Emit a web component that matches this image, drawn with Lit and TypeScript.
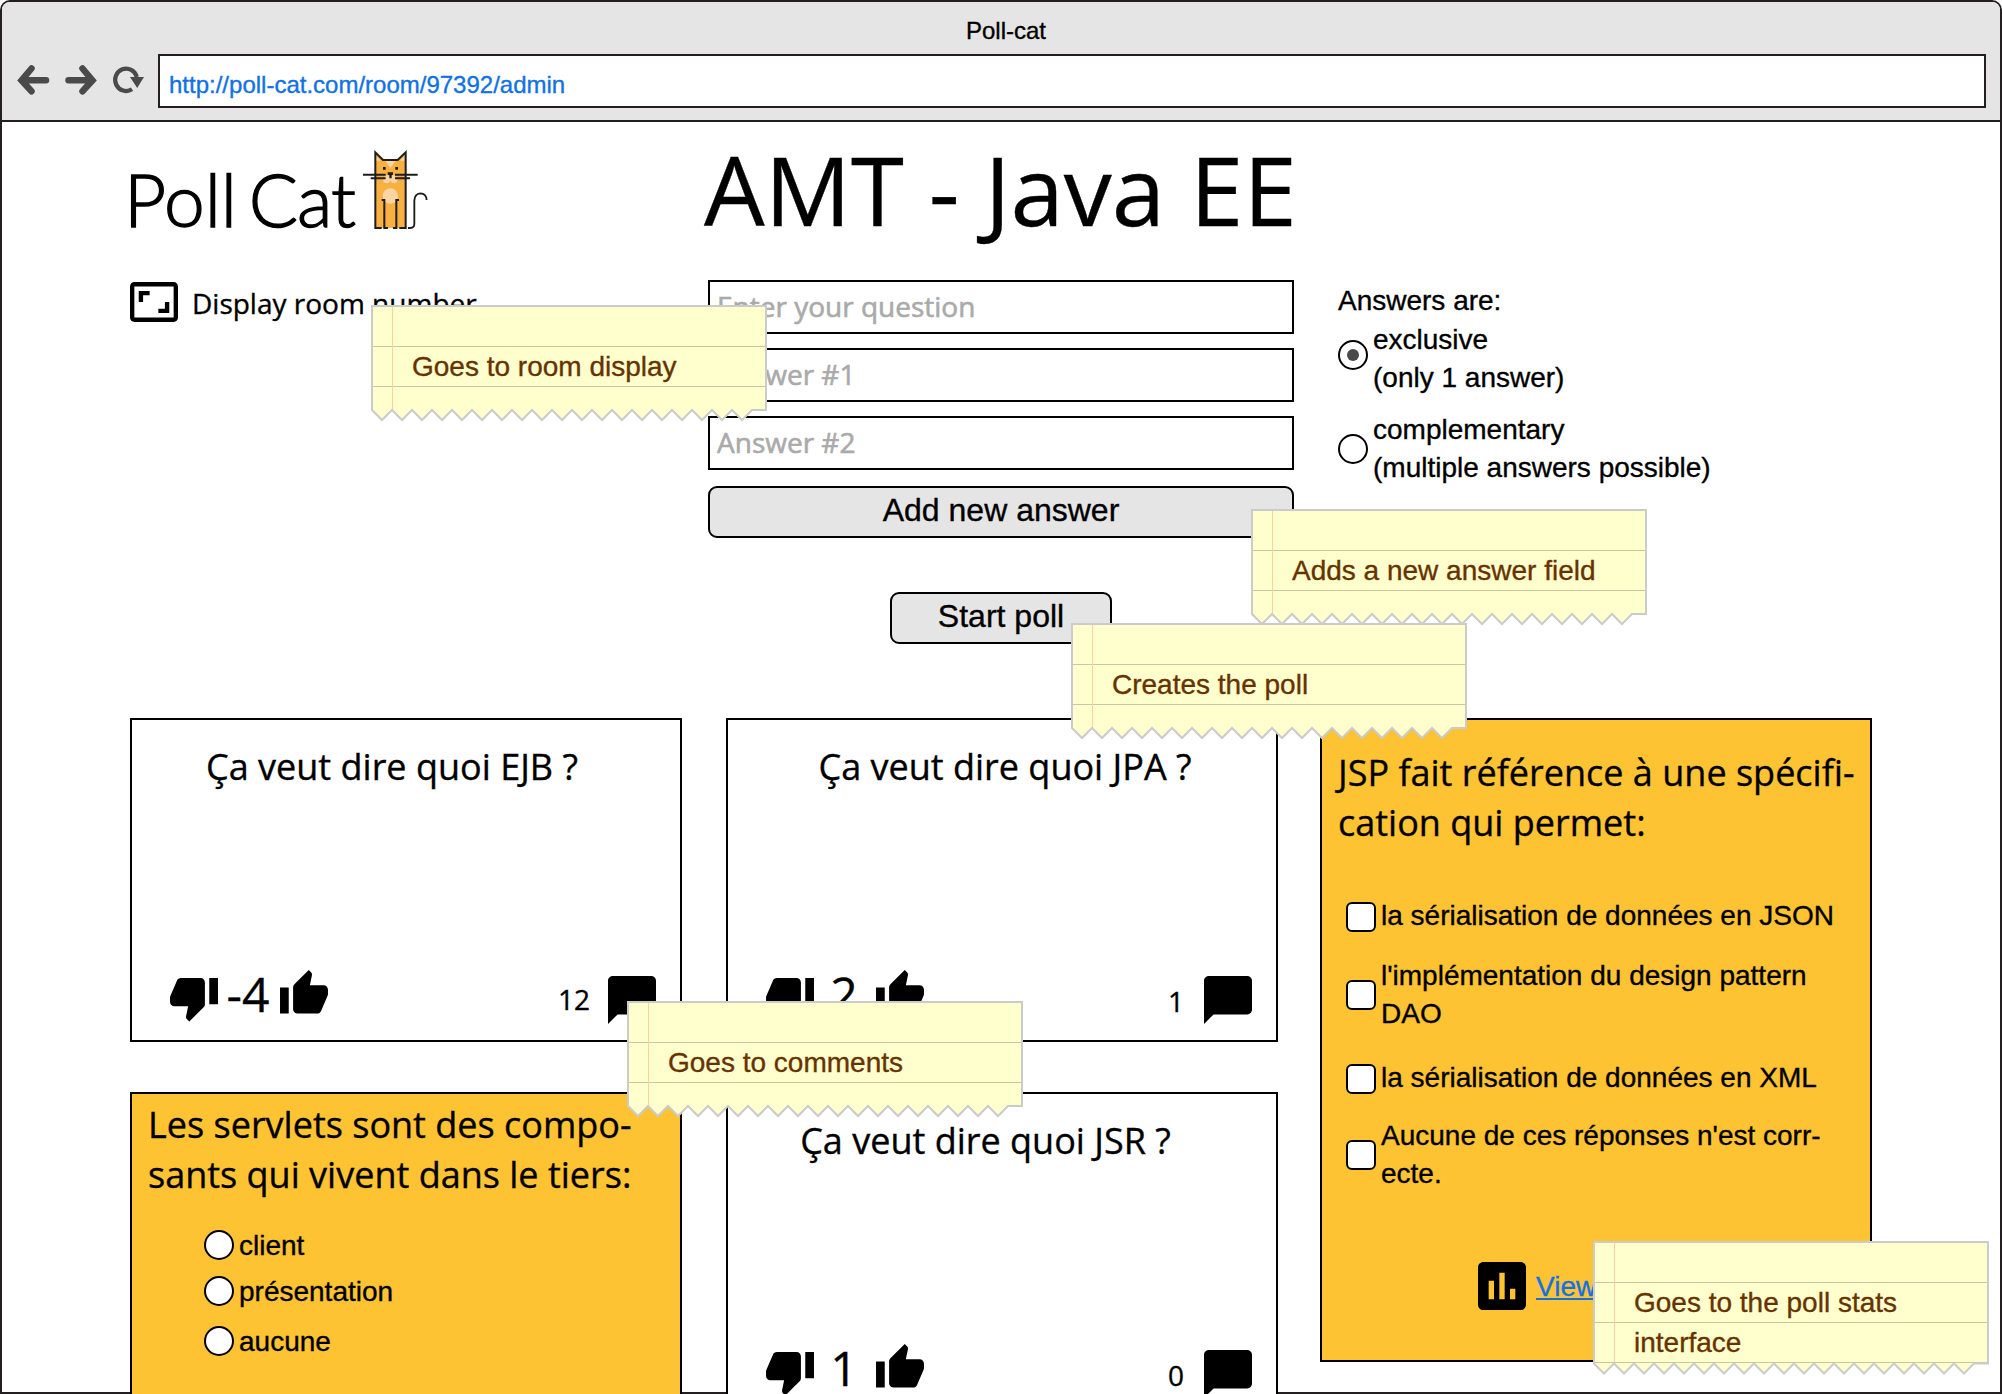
import { LitElement, html, css, svg } from "lit";
import { customElement, property } from "lit/decorators.js";

const THUMB_UP = "M1 21h4V9H1v12zm22-11c0-1.1-.9-2-2-2h-6.31l.95-4.57.03-.32c0-.41-.17-.79-.44-1.06L14.17 1 7.59 7.59C7.22 7.95 7 8.45 7 9v10c0 1.1.9 2 2 2h9c.83 0 1.54-.5 1.84-1.22l3.02-7.05c.09-.23.14-.47.14-.73v-1.91l-.01-.01L23 10z";
const THUMB_DOWN = "M15 3H6c-.83 0-1.54.5-1.84 1.22l-3.02 7.05c-.09.23-.14.47-.14.73v1.91l.01.01L1 14c0 1.1.9 2 2 2h6.31l-.95 4.57-.03.32c0 .41.17.79.44 1.06L9.83 23l6.59-6.59c.36-.36.58-.86.58-1.41V5c0-1.1-.9-2-2-2zm4 0v12h4V3h-4z";
const BUBBLE = "M20 2H4c-1.1 0-2 .9-2 2v18l4-4h14c1.1 0 2-.9 2-2V4c0-1.1-.9-2-2-2z";
const ASSESSMENT = "M19 3H5c-1.1 0-2 .9-2 2v14c0 1.1.9 2 2 2h14c1.1 0 2-.9 2-2V5c0-1.1-.9-2-2-2zM9 17H7v-7h2v7zm4 0h-2V7h2v10zm4 0h-2v-4h2v4z";
const ASPECT = "M19 12h-2v3h-3v2h5v-5zM7 9h3V7H5v5h2V9zm14-6H3c-1.1 0-2 .9-2 2v14c0 1.1.9 2 2 2h18c1.1 0 2-.9 2-2V5c0-1.1-.9-2-2-2zm0 16.01H3V4.99h18v14.02z";

/* Torn yellow paper annotation. */
@customElement("paper-note")
export class PaperNote extends LitElement {
  @property({ type: Array }) lines: string[] = [];

  static styles = css`
    :host { display: block; width: 396px; }
    .paper { display: block; overflow: visible; }
    .text {
      position: absolute; left: 41px; top: 42px;
      font: 28px/40px "Liberation Sans", Arial, sans-serif;
      color: #663300; white-space: nowrap;
    }
  `;

  render() {
    const bottom = this.lines.length > 1 ? 122.5 : 105;
    const rules = this.lines.length > 1 ? [41.5, 81.5, 121.5] : [41.5, 81.5];
    let d = `M1 1H395V${bottom}H381`;
    for (let x = 371; x > 0; x -= 20) d += `L${x} ${bottom + 10}L${x - 10} ${bottom}`;
    d += "Z";
    return html`
      <svg class="paper" width="396" height=${bottom + 12}>
        <path d=${d} fill="#ffffce"></path>
        ${rules.map((y) => svg`<path d="M2 ${y}H394" stroke="#c9c8a4" stroke-width="1" shape-rendering="crispEdges"></path>`)}
        <path d="M21.5 2V${bottom}" stroke="#ffcf9f" stroke-width="1"></path>
        <path d=${d} fill="none" stroke="#cbcbcb" stroke-width="2"></path>
      </svg>
      <div class="text">${this.lines.map((l) => html`<div>${l}</div>`)}</div>
    `;
  }
}

/* Card holding an open question with its votes and comments. */
@customElement("question-card")
export class QuestionCard extends LitElement {
  @property() question = "";
  @property() score = "";
  @property() comments = "";

  static styles = css`
    :host {
      display: flex; flex-direction: column; justify-content: space-between;
      box-sizing: border-box; width: 552px; height: 324px;
      border: 2px solid #000; background: #fff;
      font-family: "Open Sans", "Noto Sans", sans-serif;
    }
    .question {
      padding: 22px var(--inset-right, 0) 0 var(--inset-left, 0); text-align: center;
      font-size: 36px; line-height: 50px; white-space: nowrap;
    }
    .footer { display: flex; align-items: flex-start; height: 66px; padding: 0 24px 0 38px; }
    svg { display: block; flex: none; }
    .down { margin-top: 4px; }
    .up { margin-top: -4px; }
    .score {
      box-sizing: border-box; width: 62px; padding-right: 2px;
      display: flex; justify-content: center; font-size: 48px; line-height: 40px;
    }
    .count {
      margin-left: auto; padding-right: var(--count-gap, 20px);
      font-size: 28px; line-height: var(--count-line, 54px);
    }
    .bubble { margin-top: 2px; }
  `;

  render() {
    return html`
      <div class="question">${this.question}</div>
      <div class="footer">
        <svg class="down" width="48" height="43.6" viewBox="1 3 22 20"><path d=${THUMB_DOWN}></path></svg>
        <div class="score">${this.score}</div>
        <svg class="up" width="48" height="43.6" viewBox="1 1 22 20"><path d=${THUMB_UP}></path></svg>
        <div class="count">${this.comments}</div>
        <svg class="bubble" width="48" height="48" viewBox="2 2 20 20"><path d=${BUBBLE}></path></svg>
      </div>
    `;
  }
}

@customElement("app-root")
export class AppRoot extends LitElement {
  static styles = css`
    :host {
      display: block; position: relative; width: 2002px; height: 1394px; overflow: hidden;
      background: #fff; color: #000;
      font-family: "Liberation Sans", Arial, sans-serif; font-size: 28px; line-height: 38px;
      -webkit-text-stroke-width: 0.35px;
      --open: "Open Sans", "Noto Sans", sans-serif;
    }
    svg { display: block; flex: none; overflow: visible; }
    .window {
      box-sizing: border-box; width: 2002px; height: 1394px;
      border: 2px solid #231f20; border-radius: 10px 10px 0 0;
    }
    .chrome {
      height: 118px; background: #e5e5e5; border-bottom: 2px solid #231f20;
      border-radius: 8px 8px 0 0; font-size: 24px;
    }
    .caption { height: 52px; line-height: 58px; padding-left: 10px; text-align: center; }
    .bar { display: flex; align-items: flex-start; height: 54px; padding: 0 14px 0 14px; }
    .nav { margin: 10px 14px 0 0; }
    .address {
      box-sizing: border-box; flex: 1; height: 54px; border: 2px solid #231f20;
      background: #fff; color: #1071e5; padding-left: 9px; line-height: 58px;
    }
    .main { padding-left: 128px; }
    .head { display: flex; height: 158px; }
    .brand { width: 574px; padding-top: 18px; }
    .wordmark { font-family: Lato, sans-serif; font-weight: 300; font-size: 219px; }
    .title { font: 96px/130px var(--open); padding-top: 2px; margin: 0; white-space: nowrap; }
    .form { display: flex; height: 438px; }
    .room { display: flex; align-items: flex-start; width: 578px; padding-top: 2px; gap: 14px; }
    .room-label { font: 28px/42px var(--open); }
    .fields { display: flex; flex-direction: column; width: 586px; gap: 14px; }
    .field {
      box-sizing: border-box; height: 54px; border: 2px solid #000; background: #fff;
      padding-left: 7px; font: 28px/48px var(--open); color: #aaa;
      -webkit-text-stroke-width: 0.6px;
    }
    .button {
      box-sizing: border-box; height: 52px; border: 2px solid #000; border-radius: 9px;
      background: #e5e5e5; text-align: center; font-size: 32px; line-height: 44px; margin-top: 2px;
    }
    .start { width: 222px; align-self: center; margin-top: 40px; }
    .kind { padding: 2px 0 0 44px; }
    .choice { display: flex; gap: 5px; padding-top: 1px; }
    .choice + .choice { margin-top: 13px; }
    .radio {
      box-sizing: border-box; flex: none; width: 30px; height: 30px; border: 2px solid #000;
      border-radius: 50%; background: #fff; display: flex; align-items: center; justify-content: center;
    }
    .choice .radio { margin-top: 19px; }
    .choice + .choice .radio { margin-top: 23px; }
    .radio.on::after { content: ""; width: 12px; height: 12px; border-radius: 50%; background: #4a4a4a; }
    .cards { display: grid; grid-template-columns: 596px 594px 552px; align-items: start; }
    .column { display: flex; flex-direction: column; gap: 50px; }
    .ejb { --inset-right: 28px; --count-gap: 18px; --count-line: 50px; }
    .jpa { --inset-left: 6px; }
    .jsr { --inset-right: 33px; }
    .poll {
      box-sizing: border-box; width: 552px; height: 324px; border: 2px solid #000;
      background: #fdc332; padding: 6px 0 0 16px;
    }
    .poll.tall { height: 644px; padding-top: 28px; }
    .poll-title { font: 36px/50px var(--open); white-space: nowrap; }
    .option { display: flex; align-items: center; gap: 5px; white-space: nowrap; }
    .single { padding-left: 56px; margin-top: 26px; }
    .single .option { height: 38px; }
    .single .label { padding-top: 2px; }
    .single .option + .option { margin-top: 8px; }
    .single .option + .option + .option { margin-top: 12px; }
    .multi { padding-left: 8px; padding-top: 50px; display: flex; flex-direction: column; }
    .multi .option { height: 38px; }
    .multi .label { padding-bottom: 3px; }
    .multi .label.double { padding-bottom: 1px; }
    .multi .option:nth-child(2) { margin-top: 40px; }
    .multi .option:nth-child(3) { margin-top: 46px; }
    .multi .option:nth-child(4) { margin-top: 38px; }
    .box {
      box-sizing: border-box; flex: none; width: 30px; height: 30px; border: 2px solid #000;
      border-radius: 6px; background: #fff;
    }
    .stats { display: flex; align-items: center; gap: 10px; padding-left: 140px; margin-top: 88px; }
    .link {
      color: #1071e5; text-decoration: underline; text-decoration-thickness: 2px;
      text-underline-offset: 2px; padding-top: 2px;
    }
    .note { position: absolute; }
    .n1 { left: 371px; top: 305px; }
    .n2 { left: 1251px; top: 509px; }
    .n3 { left: 1071px; top: 623px; }
    .n4 { left: 627px; top: 1001px; }
    .n5 { left: 1593px; top: 1241px; }
  `;

  private choice(a: string, b: string, on = false) {
    return html`<div class="choice"><span class="radio ${on ? "on" : ""}"></span><div><div>${a}</div><div>${b}</div></div></div>`;
  }

  private nav() {
    return html`
      <svg class="nav" width="128" height="32" viewBox="16 64 128 32" fill="none" stroke="#4a4a4a" stroke-linecap="round">
        <path d="M46 80.3H24M31.500 68.500L21.500 80.300L31.500 91.300" stroke-width="6.500"></path>
        <path d="M68.500 80.300H90M82.500 68.500L92.500 80.300L82.500 91.300" stroke-width="6.500"></path>
        <path d="M132 89.300A11 11.200 0 1 1 136.800 77" stroke-width="4.200" stroke-linecap="butt"></path>
        <path d="M130 77H144L137.200 88Z" fill="#4a4a4a" stroke="none"></path>
      </svg>`;
  }

  private logo() {
    return html`
      <svg width="310" height="100" viewBox="30 0 930 300" fill="none" stroke="#1d1d1b" stroke-width="6">
        <g class="wordmark" fill="#000" stroke="#000" style="-webkit-text-stroke-width: 0" stroke-width="4">
          <text x="12" y="261">Poll</text>
          <text x="386" y="261" letter-spacing="-3">Cat</text>
        </g>
        <path d="M765 36L789 60H833L857 36V264H765Z" fill="#f8b041" stroke="none"></path>
        <path d="M796 62H827L811 85ZM768 48V62H782ZM854 48V62H840Z" fill="#fbd4a3" stroke="none"></path>
        <circle cx="811" cy="168" r="23" fill="#fbd4a3" stroke="none"></circle>
        <path d="M799 106H823L832 116a9 9 0 0 1-20 6h-2a9 9 0 0 1-20-6Z" fill="#fbd4a3" stroke="none"></path>
        <path d="M785 264H766V37L789 60H833L857 37V264H838"></path>
        <path d="M785 180H793V264H804M837 180H829V264H819"></path>
        <path d="M729 104H797M752 115H797M825 104H893M825 115H870"></path>
        <path d="M803 97H819V104L815 106V115H808V106L803 104ZM789 81H797V89H789ZM826 81H834V89H826Z" fill="#1d1d1b" stroke="none"></path>
        <path d="M864 264H871Q883 263 883 251V182Q884 161 901 160Q919 161 920 180" stroke-width="5.500"></path>
      </svg>`;
  }

  render() {
    return html`
      <div class="window">
        <div class="chrome">
          <div class="caption">Poll-cat</div>
          <div class="bar">${this.nav()}<div class="address">http://poll-cat.com/room/97392/admin</div></div>
        </div>
        <div class="main">
          <div class="head">
            <div class="brand">${this.logo()}</div>
            <h1 class="title">AMT - Java EE</h1>
          </div>
          <div class="form">
            <div class="room">
              <svg width="48" height="40" viewBox="1 3 22 18" preserveAspectRatio="none"><path d=${ASPECT}></path></svg>
              <span class="room-label">Display room number</span>
            </div>
            <div class="fields">
              <div class="field">Enter your question</div>
              <div class="field">Answer #1</div>
              <div class="field">Answer #2</div>
              <div class="button">Add new answer</div>
              <div class="button start">Start poll</div>
            </div>
            <div class="kind">
              <div>Answers are:</div>
              ${this.choice("exclusive", "(only 1 answer)", true)}
              ${this.choice("complementary", "(multiple answers possible)")}
            </div>
          </div>
          <div class="cards">
            <div class="column">
              <question-card class="ejb" question="Ça veut dire quoi EJB ?" score="-4" comments="12"></question-card>
              <div class="poll">
                <div class="poll-title">Les servlets sont des compo-<br>sants qui vivent dans le tiers:</div>
                <div class="single">
                  ${["client", "présentation", "aucune"].map((t) => html`<div class="option"><span class="radio"></span><span class="label">${t}</span></div>`)}
                </div>
              </div>
            </div>
            <div class="column">
              <question-card class="jpa" question="Ça veut dire quoi JPA ?" score="2" comments="1"></question-card>
              <question-card class="jsr" question="Ça veut dire quoi JSR ?" score="1" comments="0"></question-card>
            </div>
            <div class="poll tall">
              <div class="poll-title">JSP fait référence à une spécifi-<br>cation qui permet:</div>
              <div class="multi">
                ${[["la sérialisation de données en JSON"], ["l'implémentation du design pattern", "DAO"], ["la sérialisation de données en XML"], ["Aucune de ces réponses n'est corr-", "ecte."]].map((ls) => html`<div class="option"><span class="box"></span><div class="label ${ls.length > 1 ? "double" : ""}">${ls.map((l) => html`<div>${l}</div>`)}</div></div>`)}
              </div>
              <div class="stats">
                <svg width="48" height="48" viewBox="3 3 18 18"><path d=${ASSESSMENT}></path></svg>
                <span class="link">View stats</span>
              </div>
            </div>
          </div>
        </div>
      </div>
      <paper-note class="note n1" .lines=${["Goes to room display"]}></paper-note>
      <paper-note class="note n2" .lines=${["Adds a new answer field"]}></paper-note>
      <paper-note class="note n3" .lines=${["Creates the poll"]}></paper-note>
      <paper-note class="note n4" .lines=${["Goes to comments"]}></paper-note>
      <paper-note class="note n5" .lines=${["Goes to the poll stats", "interface"]}></paper-note>
    `;
  }
}
